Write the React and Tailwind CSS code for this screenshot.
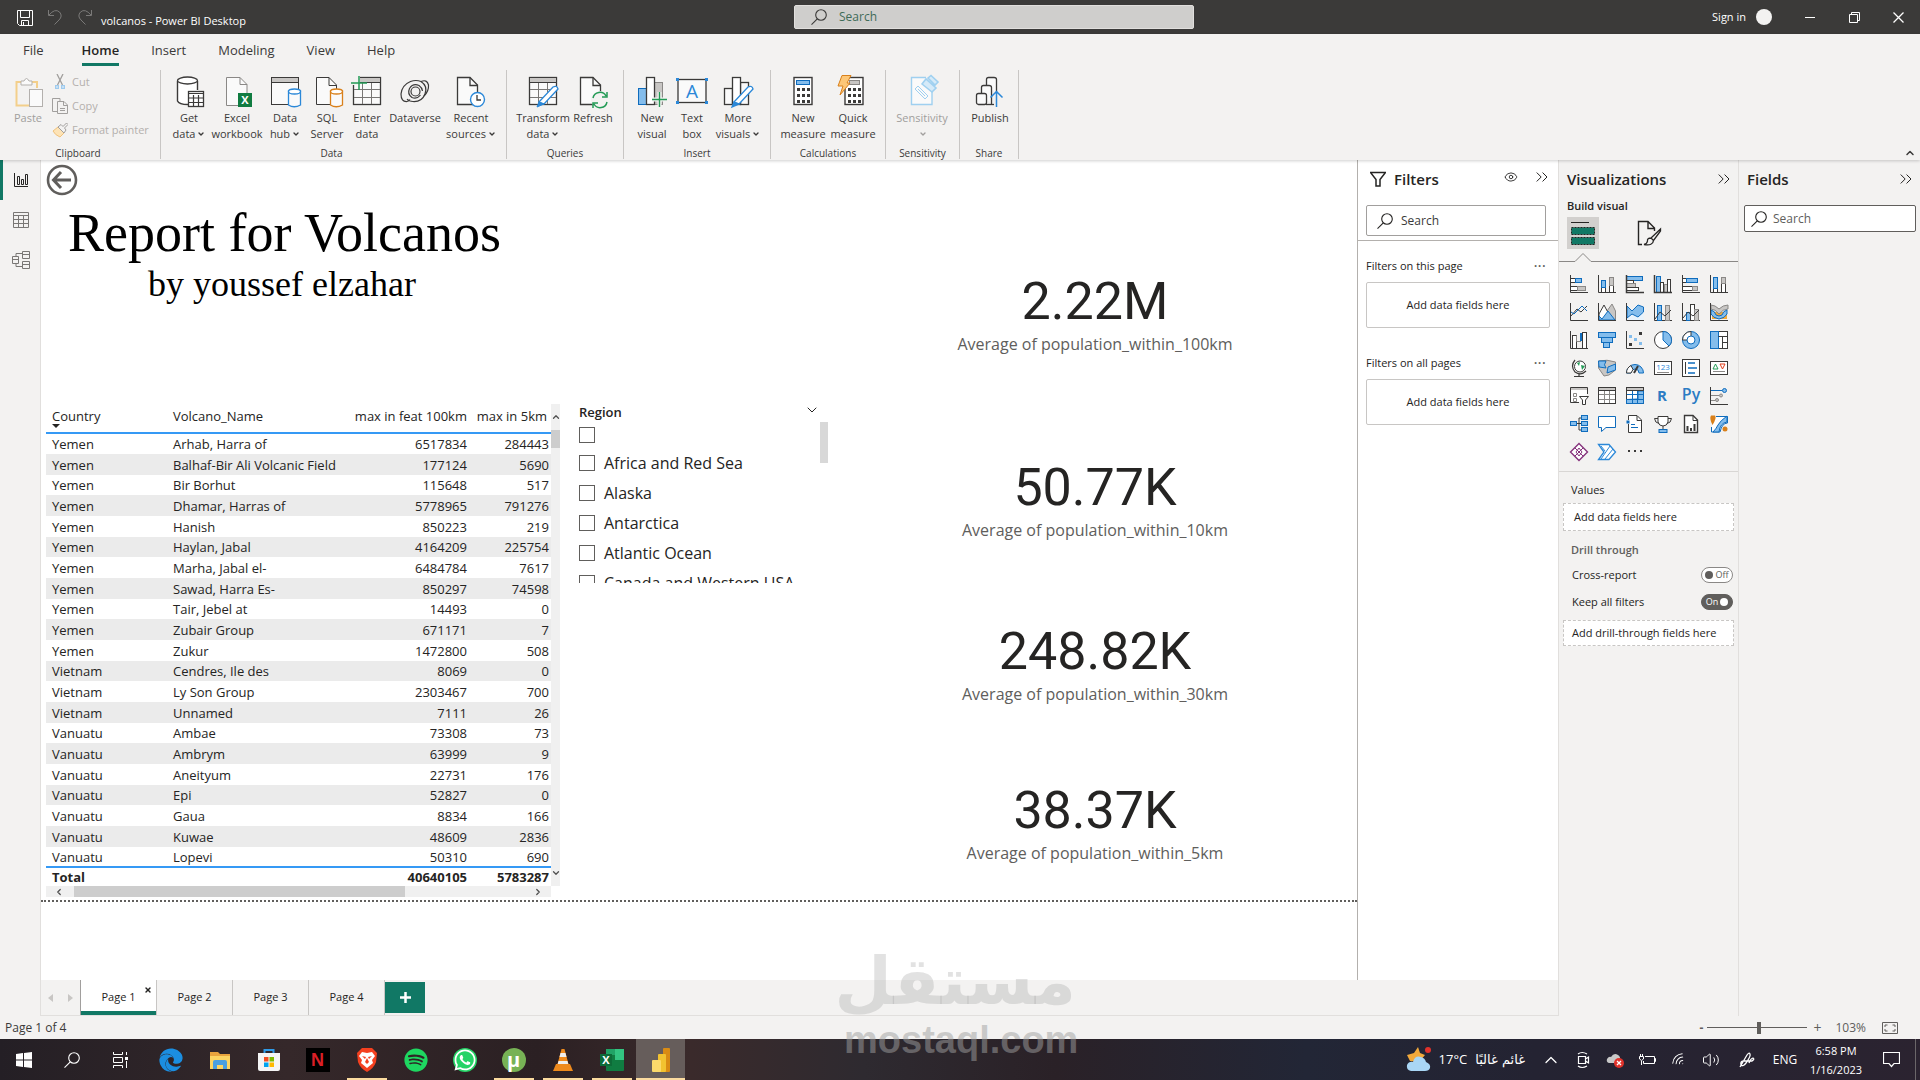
import React, { useState } from 'react'
import { ChevronDown, ChevronUp, ChevronsRight, Eye, Wifi, Volume2, X } from 'lucide-react'
import { FaEdge, FaSpotify, FaWhatsapp } from 'react-icons/fa'

const INK = '#3b3a39'
const BLUE = '#0f6cbd'
const LIGHT = '#84bdec'
const GREY = '#c8c6c4'

function Icon({ size = 18, box = size, children, className = '' }) {
  return (
    <svg
      width={size}
      height={size}
      viewBox={`0 0 ${box} ${box}`}
      fill="none"
      stroke={INK}
      className={`shrink-0 ${className}`}
      aria-hidden="true"
    >
      {children}
    </svg>
  )
}

function SearchIcon({ className = '' }) {
  return (
    <svg viewBox="0 0 16 16" fill="none" stroke="currentColor" strokeWidth="1.100" className={`size-4 shrink-0 ${className}`} aria-hidden="true">
      <circle cx="10" cy="6" r="5.300" />
      <path d="M6.300 9.800L0.500 15.600" />
    </svg>
  )
}

/* ---------- Ribbon icons, 32px ---------- */

const calcKeys = (x) =>
  [13, 19, 25].map((y) => [0, 5, 10].map((dx) => (
    <rect key={`${y}${dx}`} x={x + dx} y={y - 1} width="3" height="3" fill={INK} stroke="none" />
  )))

const pencil = (
  <g stroke="#2b88d8" fill="#fff">
    <path d="M12 26L26 11Q30 9 31 13L17 28Z" strokeWidth="1.300" />
    <path d="M12 26L17 28L10 31Z" fill="#2b88d8" />
  </g>
)

const ribbonIcons = {
  paste: (
    <g stroke="#b3b0ad">
      <path d="M9 6H4.500V29.500H17M19 6H25V12" stroke="#f3cf8b" strokeWidth="2" />
      <path d="M9 9V5H12Q14.500 0 17 5H20V9Z" fill="#fafafa" />
      <rect x="17.500" y="13.500" width="13" height="17" fill="#fafafa" />
    </g>
  ),
  getData: (
    <g>
      <path d="M5 4.500V25Q8 29 17 28.500H25V4.500" fill="#fff" stroke="none" />
      <path d="M4.500 5V25Q6 28.500 15 28.500M24.500 5V14" strokeWidth="1.400" />
      <ellipse cx="14.500" cy="4.500" rx="10" ry="3.500" fill="#fff" strokeWidth="1.300" />
      <rect x="15.500" y="15.500" width="15" height="15" fill="#fff" strokeWidth="1.300" />
      <path d="M15.500 17.500H30.500M15.500 22H30.500M15.500 26.500H30.500M20.500 19V30M25.500 19V30" strokeWidth="1.200" />
    </g>
  ),
  excel: (
    <g>
      <path d="M5.500 1.500H19L26 8.500V29.500H5.500Z" fill="#fafafa" stroke="#8a8886" />
      <path d="M19 1.500V8.500H26" stroke="#8a8886" />
      <rect x="17" y="17" width="14" height="14" fill="#107c41" stroke="none" />
      <text x="24" y="28" fontSize="11" fontWeight="700" fill="#fff" stroke="none" textAnchor="middle">X</text>
    </g>
  ),
  dataHub: (
    <g>
      <rect x="2.500" y="1.500" width="27" height="27" fill="#fafafa" />
      <rect x="3" y="2" width="26" height="4" fill={GREY} stroke="none" />
      <path d="M2.500 6.500H29.500" />
      <path d="M19.500 15V29Q25 32.500 31.500 29V15Z" fill="#fafafa" stroke="#2b88d8" strokeWidth="1.300" />
      <ellipse cx="25.500" cy="15.500" rx="6" ry="2.500" fill="#fff" stroke="#2b88d8" strokeWidth="1.300" />
    </g>
  ),
  sql: (
    <g>
      <path d="M5.500 1.500H18L25.500 9V28.500H5.500Z" fill="#fafafa" />
      <path d="M18 1.500V9.500H25.500" />
      <path d="M19.500 15V29Q25 32.500 31.500 29V15Z" fill="#fafafa" stroke="#d9801b" strokeWidth="1.300" />
      <ellipse cx="25.500" cy="15.500" rx="6" ry="2.500" fill="#fff" stroke="#d9801b" strokeWidth="1.300" />
    </g>
  ),
  enterData: (
    <g>
      <rect x="2.500" y="1.500" width="27" height="27" fill="#fafafa" strokeWidth="1.300" />
      <rect x="3" y="2" width="26" height="4" fill={GREY} stroke="none" />
      <path d="M2.500 6.500H29.500" />
      <path d="M3 13.500H29M3 21.500H29M11.500 7V28M20.500 7V28" stroke="#797775" />
      <rect x="0" y="0" width="9" height="9" fill="#f3f2f1" stroke="none" />
      <path d="M8 0V14M0 7H16" stroke="#239b56" strokeWidth="1.500" />
    </g>
  ),
  dataverse: (
    <g strokeWidth="1.200">
      <path d="M25 20Q30 15 29.500 9Q28 3 22 5.500Q17 3.500 11.500 5.500Q3 9 2 18Q2 26 8 25.500Q10 25 11 23.500" />
      <path d="M22 5.500Q29 10 26 18Q23 26 14 25.500Q10 25.500 8 23" />
      <path d="M21.500 19Q18 23.500 13 21.500Q8 18 10.500 12.500Q14 7 20 9.500Q23 11.500 23.500 15" />
      <circle cx="16.500" cy="15.500" r="4.500" />
    </g>
  ),
  recent: (
    <g>
      <path d="M2.500 1.500H15L22.500 9V28.500H2.500Z" fill="#fafafa" strokeWidth="1.300" />
      <path d="M15 1.500V9.500H22.500" strokeWidth="1.300" />
      <circle cx="22.500" cy="23.500" r="7" fill="#fff" stroke="#2b88d8" strokeWidth="1.400" />
      <path d="M22 19V24H26" strokeWidth="1.300" />
    </g>
  ),
  transform: (
    <g>
      <rect x="2.500" y="1.500" width="27" height="27" fill="#fafafa" strokeWidth="1.300" />
      <rect x="3" y="2" width="26" height="4" fill={GREY} stroke="none" />
      <path d="M3 13.500H29M3 21.500H29M11.500 7V28M20.500 7V28" stroke="#797775" />
      <path d="M2.500 6.500H29.500" />
      {pencil}
    </g>
  ),
  refresh: (
    <g>
      <path d="M3.500 1.500H16L23.500 9V28.500H3.500Z" fill="#fafafa" strokeWidth="1.300" />
      <path d="M16 1.500V9.500H23.500" strokeWidth="1.300" />
      <circle cx="23" cy="24" r="9" fill="#f3f2f1" stroke="none" />
      <path d="M16 22A7 7 0 0 1 29 20M30 26A7 7 0 0 1 17 28M30 16V21H25M16 32V27H21" stroke="#239b56" strokeWidth="1.500" />
    </g>
  ),
  newVisual: (
    <g>
      <rect x="2.500" y="12.500" width="8" height="16" fill={LIGHT} stroke={BLUE} />
      <rect x="18.500" y="6.500" width="8" height="22" fill={GREY} stroke="#8a8886" />
      <rect x="10.500" y="1.500" width="8" height="27" fill="#fff" strokeWidth="1.300" />
      <path d="M23.500 16V31M16 23.500H31" stroke="#f3f2f1" strokeWidth="4" />
      <path d="M23.500 16V31M16 23.500H31" stroke="#239b56" strokeWidth="1.400" />
    </g>
  ),
  textBox: (
    <g>
      <rect x="2" y="3.500" width="28" height="23" fill="#fafafa" strokeWidth="1.300" />
      <text x="16" y="22" fontSize="19" fill="#2b88d8" stroke="none" textAnchor="middle">A</text>
      <g fill="#2b88d8" stroke="none">
        <rect x="0" y="2" width="3" height="3" /><rect x="29" y="2" width="3" height="3" />
        <rect x="0" y="25" width="3" height="3" /><rect x="29" y="25" width="3" height="3" />
      </g>
    </g>
  ),
  moreVisuals: (
    <g strokeWidth="1.300">
      <rect x="2.500" y="12.500" width="8" height="16" fill="#fafafa" />
      <rect x="18.500" y="6.500" width="8" height="22" fill="#fafafa" />
      <rect x="10.500" y="1.500" width="8" height="27" fill="#fff" />
      {pencil}
    </g>
  ),
  newMeasure: (
    <g>
      <rect x="7" y="1.500" width="18" height="27" fill="#fff" strokeWidth="1.400" />
      <rect x="9.500" y="4.500" width="13" height="4" fill={LIGHT} stroke={BLUE} />
      {calcKeys(10)}
    </g>
  ),
  quickMeasure: (
    <g>
      <rect x="8" y="1.500" width="18" height="27" fill="#fff" strokeWidth="1.400" />
      <rect x="12.500" y="4.500" width="10" height="4" fill={GREY} stroke="#8a8886" />
      {calcKeys(11)}
      <path d="M5 -0.500H14L10 7H13L3 19L6 10H1Z" fill="#fdc777" stroke="#d9801b" />
    </g>
  ),
  sensitivity: (
    <g stroke="#9fd0f0">
      <path d="M20 1.500H5.500V28.500H26V15" fill="#fafafa" strokeWidth="1.400" />
      <path d="M9 13L12 10L22 20L19 23Z" />
      <path d="M12 13L19 20" />
      <path d="M16 8L20 3L30 12L26 16ZM22 2L25 -0.500L32 6L29 9Z" fill="#d5eaf8" strokeWidth="1.600" />
    </g>
  ),
  publish: (
    <g strokeWidth="1.300">
      <path d="M12.500 9.500V3.500Q12.500 1.500 14.500 1.500H20Q22.500 1.500 22.500 3.500V17" fill="#fafafa" />
      <path d="M7.500 17.500V11.500Q7.500 9.500 9.500 9.500H15Q17.500 9.500 17.500 11.500V28" fill="#fafafa" />
      <rect x="2.500" y="17.500" width="10" height="11" rx="2" fill="#fafafa" />
      <path d="M12 28.500H20" />
      <path d="M22.500 31V16M16.500 21.500L22.500 15.500L28.500 21.500" stroke="#2b88d8" strokeWidth="1.500" />
    </g>
  ),
}

const ribbon = [
  {
    name: 'Data',
    className: 'w-[346px] pl-1',
    items: [
      ['getData', 'Get', 'data', true, 'w-12'],
      ['excel', 'Excel', 'workbook', false, 'w-12'],
      ['dataHub', 'Data', 'hub', true, 'w-12'],
      ['sql', 'SQL', 'Server', false, 'w-9'],
      ['enterData', 'Enter', 'data', false, 'w-11'],
      ['dataverse', 'Dataverse', '', false, 'w-13'],
      ['recent', 'Recent', 'sources', true, 'w-15'],
    ],
  },
  {
    name: 'Queries',
    className: 'w-[117px] pl-2',
    items: [
      ['transform', 'Transform', 'data', true, 'w-14'],
      ['refresh', 'Refresh', '', false, 'w-11'],
    ],
  },
  {
    name: 'Insert',
    className: 'w-[147px] pl-2',
    items: [
      ['newVisual', 'New', 'visual', false, 'w-10'],
      ['textBox', 'Text', 'box', false, 'w-10'],
      ['moreVisuals', 'More', 'visuals', true, 'w-13'],
    ],
  },
  {
    name: 'Calculations',
    className: 'w-[115px] pl-2',
    items: [
      ['newMeasure', 'New', 'measure', false, 'w-12'],
      ['quickMeasure', 'Quick', 'measure', false, 'w-13'],
    ],
  },
  {
    name: 'Sensitivity',
    className: 'w-[74px] pl-2',
    items: [['sensitivity', 'Sensitivity', '', true, 'w-14']],
    disabled: true,
  },
  {
    name: 'Share',
    className: 'w-[59px] pl-2',
    items: [['publish', 'Publish', '', false, 'w-11']],
  },
]

function RibbonButton({ icon, line1, line2, arrow, width, disabled }) {
  return (
    <button
      disabled={disabled}
      className={`flex flex-col items-center whitespace-nowrap text-[11px] leading-4 ${width} ${
        disabled ? 'text-[#a19f9d]' : 'text-[#3b3a39]'
      }`}
    >
      <Icon size={32} className="mb-0.5 overflow-visible">{ribbonIcons[icon]}</Icon>
      <span>{line1}</span>
      <span className="flex h-4 items-center">
        {line2}
        {arrow && <ChevronDown className="ml-0.5 size-2" strokeWidth={4} />}
      </span>
    </button>
  )
}

function RibbonGroup({ name, className, children }) {
  return (
    <section className={`flex h-[89px] shrink-0 flex-col border-r border-[#c8c6c4] ${className}`} aria-label={name}>
      <div className="flex h-[77px] pt-1.5">{children}</div>
      <div className="pr-2 text-center text-[10px] leading-3 text-[#3b3a39]">{name}</div>
    </section>
  )
}

function TitleBar() {
  return (
    <div className="grid h-[34px] grid-cols-[794fr_400fr_726fr] items-center bg-[#3b3a39] text-xs text-white">
      <div className="flex items-center pl-4">
        <button aria-label="Save" className="mr-3.5">
          <Icon size={17} className="stroke-white!">
            <path d="M1.500 1.500H16.500V16.500H3.500L1.500 14.500ZM4.500 2V8.500H13.500V2M5.500 16V11.500H12.500V16M7.500 13V16" />
          </Icon>
        </button>
        <button aria-label="Undo" className="mr-3.5">
          <Icon size={16} className="stroke-[#7a7978]!">
            <path d="M1.500 1V6.500H7M2 6Q8 -1 12.500 3Q16 7 12 11L7.500 15.500" />
          </Icon>
        </button>
        <button aria-label="Redo" className="mr-2">
          <Icon size={16} className="stroke-[#7a7978]!">
            <path d="M14.500 1V6.500H9M14 6Q8 -1 3.500 3Q0 7 4 11L8.500 15.500" />
          </Icon>
        </button>
        <span className="pt-2 text-[11px]">volcanos - Power BI Desktop</span>
      </div>
      <label className="flex h-6 items-center rounded-xs border border-[#e1dfdd] bg-[#cfcecc] pl-4 text-[#3b3a39]">
        <SearchIcon />
        <input
          type="text"
          aria-label="Search"
          placeholder="Search"
          className="ml-3 w-full bg-transparent text-xs outline-none placeholder:text-[#3f6b58]"
        />
      </label>
      <div className="flex items-center justify-end">
        <button className="flex items-center gap-2.5 text-[11px]">
          Sign in <span className="size-4 rounded-full bg-[#f3f2f1]" />
        </button>
        <div className="ml-4 flex">
          <button aria-label="Minimize" className="flex w-11 justify-center">
            <Icon size={11} className="stroke-white!"><path d="M0 5.500H10" /></Icon>
          </button>
          <button aria-label="Restore" className="flex w-11 justify-center">
            <Icon size={11} className="stroke-white!">
              <path d="M0.500 2.500H8.500V10.500H0.500ZM2.500 2V0.500H10.500V8.500H9" />
            </Icon>
          </button>
          <button aria-label="Close" className="flex w-11 justify-center">
            <Icon size={11} className="stroke-white!"><path d="M0.500 0.500L10.500 10.500M10.500 0.500L0.500 10.500" strokeWidth="1.300" /></Icon>
          </button>
        </div>
      </div>
    </div>
  )
}

function Ribbon() {
  return (
    <header className="relative z-10 h-[126px] bg-[#f3f2f1] text-[#3b3a39] shadow-[0_1px_3px_#00000030]">
      <nav className="flex h-9 gap-8 pl-[23px] text-[13px] leading-[33px]">
        <a href="#file" className="mr-1.5">File</a>
        <a href="#home" className="h-8 border-b-3 border-[#117865] font-semibold text-[#252423]">Home</a>
        <a href="#insert">Insert</a>
        <a href="#modeling">Modeling</a>
        <a href="#view">View</a>
        <a href="#help">Help</a>
      </nav>
      <div className="flex">
        <RibbonGroup name="Clipboard" className="w-[161px] pl-1">
          <RibbonButton icon="paste" line1="Paste" width="w-12" disabled />
          <div className="-mt-1.5 flex flex-col text-[11px] leading-6 text-[#b3b0ad]">
            <button disabled className="flex items-center gap-1">
              <Icon size={16} className="stroke-[#a19f9d]!">
                <path d="M5 0L10.500 11M11 0L5.500 11" strokeWidth="1.300" />
                <rect x="3.500" y="11.500" width="3" height="3" fill="#c7e0f4" stroke="#9fcbee" /><rect x="9.500" y="11.500" width="3" height="3" fill="#c7e0f4" stroke="#9fcbee" />
              </Icon>
              Cut
            </button>
            <button disabled className="flex items-center gap-1">
              <Icon size={16} className="stroke-[#a19f9d]!">
                <path d="M5 13.500H0.500V0.500H8V3M5.500 3.500H12L15.500 7V15.500H5.500ZM11.500 4V7.500H15M8 10.500H13M8 12.500H13" />
              </Icon>
              Copy
            </button>
            <button disabled className="flex items-center gap-1 whitespace-nowrap">
              <Icon size={16} className="stroke-[#a19f9d]!">
                <path d="M1 9L6 5L12 11L8 15Q3 13 1 9Z" fill="#fde3b6" stroke="#f0c27c" />
                <path d="M6 5L9 2.500L11 4.500L14.500 1L16 2.500L12.500 6L14 8L12 11Z" fill="#f3f2f1" />
              </Icon>
              Format painter
            </button>
          </div>
        </RibbonGroup>
        {ribbon.map((g) => (
          <RibbonGroup key={g.name} name={g.name} className={g.className}>
            {g.items.map(([icon, line1, line2, arrow, width]) => (
              <RibbonButton key={icon} icon={icon} line1={line1} line2={line2} arrow={arrow} width={width} disabled={g.disabled} />
            ))}
          </RibbonGroup>
        ))}
        <button aria-label="Collapse ribbon" className="mt-auto mr-1 ml-auto">
          <ChevronUp className="size-3" strokeWidth={3} />
        </button>
      </div>
    </header>
  )
}

function ViewRail() {
  return (
    <nav className="flex w-[41px] shrink-0 flex-col border-r border-[#e1dfdd] bg-[#f3f2f1]">
      <button aria-label="Report view" className="flex h-10 items-center border-l-3 border-[#117865] pl-2.5">
        <Icon size={16} className="stroke-[#252423]!">
          <path d="M1.500 1V14.500H15M4.500 4.500H6.500V12.500H4.500ZM8.500 7.500H10.500V12.500H8.500ZM12.500 2.500H14.500V12.500H12.500Z" />
        </Icon>
      </button>
      <button aria-label="Data view" className="flex h-10 items-center pl-3">
        <Icon size={18} className="stroke-[#797775]!">
          <path d="M1.500 1.500H16.500V16.500H1.500ZM1.500 4.500H16.500M1.500 8.500H16.500M1.500 12.500H16.500M6.500 5V16M11.500 5V16" />
        </Icon>
      </button>
      <button aria-label="Model view" className="flex h-10 items-center pl-3">
        <Icon size={18} className="stroke-[#797775]!">
          <path d="M0.500 5.500H6.500V12.500H0.500ZM0.500 8.500H6.500M10.500 0.500H17.500V7.500H10.500ZM10.500 3.500H17.500M10.500 10.500H17.500V17.500H10.500ZM10.500 13.500H17.500M4 5V2.500H10M4 13V15.500H10" />
        </Icon>
      </button>
    </nav>
  )
}

const rows = [
  ['Yemen', 'Arhab, Harra of', 6517834, 284443],
  ['Yemen', 'Balhaf-Bir Ali Volcanic Field', 177124, 5690],
  ['Yemen', 'Bir Borhut', 115648, 517],
  ['Yemen', 'Dhamar, Harras of', 5778965, 791276],
  ['Yemen', 'Hanish', 850223, 219],
  ['Yemen', 'Haylan, Jabal', 4164209, 225754],
  ['Yemen', 'Marha, Jabal el-', 6484784, 7617],
  ['Yemen', 'Sawad, Harra Es-', 850297, 74598],
  ['Yemen', 'Tair, Jebel at', 14493, 0],
  ['Yemen', 'Zubair Group', 671171, 7],
  ['Yemen', 'Zukur', 1472800, 508],
  ['Vietnam', 'Cendres, Ile des', 8069, 0],
  ['Vietnam', 'Ly Son Group', 2303467, 700],
  ['Vietnam', 'Unnamed', 7111, 26],
  ['Vanuatu', 'Ambae', 73308, 73],
  ['Vanuatu', 'Ambrym', 63999, 9],
  ['Vanuatu', 'Aneityum', 22731, 176],
  ['Vanuatu', 'Epi', 52827, 0],
  ['Vanuatu', 'Gaua', 8834, 166],
  ['Vanuatu', 'Kuwae', 48609, 2836],
  ['Vanuatu', 'Lopevi', 50310, 690],
]

function VolcanoTable() {
  return (
    <div className="grid w-[514px] grid-cols-[1fr_9px]">
      <table className="w-full table-fixed border-collapse text-[13px] leading-4 text-[#252423]">
        <colgroup>
          <col className="w-[121px]" />
          <col />
          <col className="w-[122px]" />
          <col className="w-[82px]" />
        </colgroup>
        <thead>
          <tr className="h-[29px] border-b-2 border-[#3599f5] text-left align-top whitespace-nowrap">
            <th className="pt-1 pl-1.5 font-normal">
              Country
              <svg width="8" height="4" viewBox="0 0 8 4" className="block" aria-hidden="true"><path d="M0 0H8L4 4Z" fill="#252423" /></svg>
            </th>
            <th className="pt-1 pl-1.5 font-normal">Volcano_Name</th>
            <th className="pt-1 pr-0.5 text-right font-normal">max in feat 100km</th>
            <th className="pt-1 pr-1 text-right font-normal">max in 5km</th>
          </tr>
        </thead>
        <tbody>
          {rows.map(([country, name, feat, near]) => (
            <tr key={name} className="h-[21px] nth-[3n]:h-5 even:bg-[#ebebeb]">
              <td className="pl-1.5">{country}</td>
              <td className="pl-1.5 whitespace-nowrap">{name}</td>
              <td className="pr-0.5 text-right">{feat}</td>
              <td className="pr-0.5 text-right">{near}</td>
            </tr>
          ))}
        </tbody>
        <tfoot>
          <tr className="h-[19px] border-t-2 border-[#3599f5] font-bold">
            <td className="pl-1.5">Total</td>
            <td />
            <td className="pr-0.5 text-right">40640105</td>
            <td className="pr-0.5 text-right">5783287</td>
          </tr>
        </tfoot>
      </table>
      <div className="flex flex-col items-center bg-[#f0f0f0] text-[#505050]">
        <ChevronUp className="mt-2 size-2.5" strokeWidth={3} />
        <div className="mt-2 h-[18px] w-full bg-[#cdcdcd]" />
        <ChevronDown className="mt-auto mb-2 size-2.5" strokeWidth={3} />
      </div>
      <div className="flex h-[11px] items-center bg-[#f0f0f0] px-2 text-[#505050]">
        <ChevronUp className="size-2.5 -rotate-90" strokeWidth={3} />
        <div className="ml-2.5 h-full w-[331px] bg-[#cdcdcd]" />
        <ChevronUp className="ml-auto size-2.5 rotate-90" strokeWidth={3} />
      </div>
    </div>
  )
}

const regions = ['', 'Africa and Red Sea', 'Alaska', 'Antarctica', 'Atlantic Ocean', 'Canada and Western USA']

function RegionSlicer() {
  return (
    <fieldset className="h-[179px] w-[249px] overflow-hidden text-[#252423]">
      <div className="flex h-[18px] items-center justify-between pr-2">
        <span className="text-[13px] font-semibold">Region</span>
        <ChevronDown className="mb-1.5 size-4" strokeWidth={1.5} />
      </div>
      <div className="flex justify-between">
        <div className="flex flex-col pt-[5px]">
          {regions.map((r) => (
            <label key={r} className="flex h-[30px] gap-[9px] text-base leading-4 first:h-7">
              <input
                type="checkbox"
                aria-label={r || '(Blank)'}
                className="size-4 appearance-none border border-[#605e5c] bg-white checked:bg-[#252423]"
              />
              {r}
            </label>
          ))}
        </div>
        <div className="h-[41px] w-2 bg-[#d8d8d8]" />
      </div>
    </fieldset>
  )
}

function Card({ value, label, className }) {
  return (
    <div className={`flex flex-col items-center ${className}`}>
      <div className="font-[Roboto] text-[52px] leading-[60px] text-[#252423]">{value}</div>
      <div className="text-base leading-6 text-[#605e5c]">{label}</div>
    </div>
  )
}

function Canvas() {
  return (
    <main className="flex min-w-0 flex-1 flex-col bg-white">
      <div className="flex h-[742px] border-b-2 border-dotted border-[#605e5c]">
        <div className="w-[538px] shrink-0 pt-1 pl-[5px]">
          <button aria-label="Back" className="block">
            <Icon size={32} className="stroke-[#605e5c]!">
              <circle cx="16" cy="16" r="14" strokeWidth="2.600" />
              <path d="M25 16H8M15 8L7.500 16L15 24" strokeWidth="3" />
            </Icon>
          </button>
          <div className="mt-2 mb-[98px] pl-[22px] font-['Liberation_Serif',serif] text-black">
            <h1 className="text-[54px] leading-[58px]">Report for Volcanos</h1>
            <p className="w-[428px] text-center text-[36px] leading-[44px]">by youssef elzahar</p>
          </div>
          <VolcanoTable />
        </div>
        <div className="w-[254px] shrink-0 pt-[244px]">
          <RegionSlicer />
        </div>
        <div className="flex-1">
          <Card value="2.22M" label="Average of population_within_100km" className="pt-[112px]" />
          <Card value="50.77K" label="Average of population_within_10km" className="pt-[102px]" />
          <Card value="248.82K" label="Average of population_within_30km" className="pt-20" />
          <Card value="38.37K" label="Average of population_within_5km" className="pt-[75px]" />
        </div>
      </div>
    </main>
  )
}

function DropBox({ title }) {
  return (
    <section className="px-2">
      <div className="flex items-center justify-between">
        <h3>{title}</h3>
        <button aria-label={`${title} options`} className="px-1 text-base leading-4 text-[#605e5c]">···</button>
      </div>
      <div className="mt-2 flex h-[46px] items-center justify-center rounded-xs border border-[#c8c6c4] bg-white">
        Add data fields here
      </div>
    </section>
  )
}

function FiltersPane() {
  return (
    <aside className="flex w-[201px] shrink-0 flex-col border-l border-[#b3b0ad] bg-white text-[11px] leading-4 text-[#252423]">
      <div className="flex h-[38px] items-center pr-1.5 pl-3">
        <Icon size={16} className="stroke-[#252423]!">
          <path d="M0.500 1.500H15.500L10 8.500V15H6V8.500Z" strokeWidth="1.500" />
        </Icon>
        <h2 className="ml-2 text-[15px] font-semibold">Filters</h2>
        <button aria-label="Show filters" className="mr-3.5 mb-1 ml-auto"><Eye className="size-3.5" strokeWidth={1.500} /></button>
        <button aria-label="Collapse filters" className="mb-1"><ChevronsRight className="size-5" strokeWidth={1.2} /></button>
      </div>
      <div className="mb-[17px] border-b border-[#b3b0ad] px-2 pt-[7px] pr-3 pb-1">
        <label className="flex h-[31px] items-center rounded-xs border border-[#a19f9d] pl-2.5">
          <SearchIcon />
          <input type="text" aria-label="Search filters" placeholder="Search" className="ml-2 w-full text-xs outline-none placeholder:text-[#3b3a39]" />
        </label>
      </div>
      <div className="flex flex-col gap-[27px]">
        <DropBox title="Filters on this page" />
        <DropBox title="Filters on all pages" />
      </div>
    </aside>
  )
}

/* ---------- Visual gallery, 18px glyphs ---------- */

const axes = <path d="M0.500 0V17.500H18" />
const bF = { fill: LIGHT, stroke: BLUE }
const gF = { fill: GREY, stroke: '#8a8886' }
const wF = { fill: '#fff', stroke: INK }

const gallery = [
  ['Stacked bar chart', <><rect x="0.500" y="3.500" width="5" height="4" {...wF} /><rect x="5.500" y="3.500" width="6" height="4" {...bF} /><rect x="0.500" y="11.500" width="7" height="4" {...wF} /><rect x="7.500" y="11.500" width="8" height="4" {...gF} />{axes}</>],
  ['Stacked column chart', <>{axes}<rect x="3.500" y="11.500" width="4" height="6" {...wF} /><rect x="3.500" y="5.500" width="4" height="7" {...bF} /><rect x="11.500" y="10.500" width="4" height="7" {...wF} /><rect x="11.500" y="2.500" width="4" height="8" {...gF} /></>],
  ['Clustered bar chart', <><rect x="0.500" y="1.500" width="16" height="4" {...bF} /><rect x="0.500" y="5.500" width="7" height="3" {...wF} /><rect x="0.500" y="8.500" width="9" height="4" {...gF} /><rect x="0.500" y="12.500" width="12" height="3" {...wF} /><path d="M0.500 0V17.500H18" strokeWidth="1.500" /></>],
  ['Clustered column chart', <><rect x="2.500" y="1.500" width="4" height="16" {...bF} /><rect x="6.500" y="7.500" width="3" height="10" {...wF} /><rect x="10.500" y="9.500" width="3" height="8" {...gF} /><rect x="13.500" y="4.500" width="3" height="13" {...wF} /><path d="M0.500 0V17.500H18" strokeWidth="1.500" /></>],
  ['100% stacked bar chart', <><rect x="0.500" y="3.500" width="4" height="4" {...wF} /><rect x="4.500" y="3.500" width="11" height="4" {...bF} /><rect x="0.500" y="11.500" width="10" height="4" {...wF} /><rect x="10.500" y="11.500" width="5" height="4" {...gF} />{axes}</>],
  ['100% stacked column chart', <>{axes}<rect x="3.500" y="13.500" width="4" height="4" {...wF} /><rect x="3.500" y="2.500" width="4" height="11" {...bF} /><rect x="11.500" y="8.500" width="4" height="9" {...wF} /><rect x="11.500" y="2.500" width="4" height="6" {...gF} /></>],
  ['Line chart', <>{axes}<path d="M1 13L7 6L11 9L17 3" /><path d="M1 9L4 11L12 3L17 8" stroke={BLUE} /></>],
  ['Area chart', <><path d="M9 8L14 1L17.500 8V17H10Z" {...gF} /><path d="M1 11L6 2L14 17H1Z" {...wF} /><path d="M1 13L4 16L10 8L17 17H1Z" {...bF} />{axes}</>],
  ['Stacked area chart', <><path d="M1 3L6 8L12 3L17.500 6V17H1Z" fill="#e8f3fc" stroke="none" /><path d="M1 3L6 8L12 2L17.500 4V9L12 14L6 11L1 15Z" {...bF} />{axes}</>],
  ['Line and stacked column chart', <>{axes}<rect x="3.500" y="2.500" width="4" height="15" {...bF} /><rect x="11.500" y="2.500" width="4" height="15" {...gF} /><path d="M1 16L6 9L11 13L17 7" /></>],
  ['Line and clustered column chart', <>{axes}<rect x="4.500" y="9.500" width="4" height="8" {...bF} /><rect x="8.500" y="1.500" width="4" height="16" {...wF} /><rect x="12.500" y="6.500" width="4" height="11" {...gF} /><path d="M1 15L6 9L11 13L17 7" /></>],
  ['Ribbon chart', <><rect x="2" y="9" width="15" height="7" fill="#f2a93b" stroke="none" /><path d="M1 2Q5 2 9 6Q13 2 18 2V6Q13 6 9 11Q5 6 1 6Z" {...gF} /><path d="M1 7Q5 8 6 12Q9 14 12 12Q13 8 17 7V11Q15 15 9 16Q3 15 1 11Z" {...bF} />{axes}</>],
  ['Waterfall chart', <>{axes}<rect x="2.500" y="4.500" width="4" height="13" {...wF} /><path d="M6.500 4.500V10.500H11" stroke="#8a8886" /><path d="M11 2V10" stroke={BLUE} strokeWidth="2" /><rect x="12.500" y="1.500" width="4" height="16" {...wF} /></>],
  ['Funnel', <><rect x="0.500" y="1.500" width="17" height="5" {...bF} /><rect x="3.500" y="6.500" width="11" height="5" {...bF} /><rect x="5.500" y="11.500" width="6" height="5" {...bF} /></>],
  ['Scatter chart', <>{axes}<g stroke="none"><rect x="13" y="1" width="3" height="3" fill={INK} /><rect x="3" y="12" width="3" height="3" fill={INK} /><rect x="3" y="4" width="3" height="3" fill={LIGHT} /><rect x="8" y="7" width="3" height="3" fill={LIGHT} /><rect x="13" y="11" width="3" height="3" fill={LIGHT} /></g></>],
  ['Pie chart', <><circle cx="9" cy="9" r="8.500" {...wF} /><path d="M9 0.500A8.500 8.500 0 0 1 15 15L9 9Z" {...bF} /></>],
  ['Donut chart', <><circle cx="9" cy="9" r="8.500" {...bF} /><path d="M9 0.500A8.500 8.500 0 0 0 0.500 9H5L9 5Z" {...wF} /><circle cx="9" cy="9" r="4" fill="#fff" stroke={BLUE} /></>],
  ['Treemap', <><rect x="0.500" y="0.500" width="17" height="17" {...wF} /><rect x="0.500" y="0.500" width="8" height="17" {...bF} /><path d="M8.500 5.500H17.500M12.500 6V17M13 11.500H17" /></>],
  ['Map', <><circle cx="10" cy="7.500" r="5.500" {...wF} /><path d="M7 4L10 3L9 7ZM11 6L15 7L12 11Z" fill="#239b56" stroke="none" /><path d="M5 1Q0 7 5 13Q11 17 16 12M9 14V17M4 17.500H14" strokeWidth="1.200" /></>],
  ['Filled map', <><path d="M0.500 2Q9 0 17.500 3V11L11 16L6 17L0.500 9Z" {...gF} /><path d="M0.500 2H8Q5 6 8 9L1 8ZM10 8L17.500 5V11L9 14Z" {...bF} /></>],
  ['Gauge', <><path d="M0.500 14A8.500 8.500 0 0 1 17.500 14H13A4 4 0 0 0 5 14Z" fill={LIGHT} stroke={BLUE} /><path d="M0.500 14A8.500 8.500 0 0 1 5 6.500L7 10.500L5 14Z" fill="#fff" /><path d="M8 14L12 7" strokeWidth="2" /></>],
  ['Card', <><rect x="0.500" y="2.500" width="17" height="13" {...wF} /><text x="9" y="11" fontSize="8" fill="#2b88d8" stroke="none" textAnchor="middle">123</text><path d="M3 13.500H15" stroke="#8a8886" /></>],
  ['Multi-row card', <><rect x="0.500" y="0.500" width="17" height="17" {...wF} /><path d="M3.500 3V15" /><path d="M6 4H13M6 9H15M6 14H13" stroke={BLUE} strokeWidth="1.500" /></>],
  ['KPI', <><rect x="0.500" y="2.500" width="17" height="13" {...wF} /><path d="M3 10L5.500 5L8 10Z" stroke="#239b56" /><path d="M10 5H15L12.500 10Z" stroke="#e03e1a" /><path d="M3 12.500H15" stroke="#8a8886" /></>],
  ['Slicer', <><path d="M9 15.500H0.500V0.500H17.500V7" {...wF} /><path d="M1 2H17" stroke={GREY} strokeWidth="2" /><path d="M3.500 6.500H6.500V9.500H3.500ZM3.500 11.500H6.500V14.500H3.500Z" stroke="#8a8886" /><path d="M9.500 9.500H18.500L15.500 13V17.500H12.500V13Z" {...wF} /></>],
  ['Table', <><rect x="0.500" y="0.500" width="17" height="16" {...wF} /><path d="M1 2H17" stroke={GREY} strokeWidth="2" /><path d="M1 7.500H17M1 12.500H17M6.500 4V16M11.500 4V16" stroke="#8a8886" /><path d="M1 3.500H17" /></>],
  ['Matrix', <><rect x="0.500" y="0.500" width="17" height="16" {...wF} /><path d="M0.500 12.500V16.500H17.500V4H12V12Z" {...bF} /><path d="M1 2H17" stroke={GREY} strokeWidth="2" /><path d="M1 7.500H17M1 12.500H17M6.500 4V16M11.500 4V16" stroke={BLUE} /><path d="M1 3.500H17" /></>],
  ['R script visual', <text x="8" y="14" fontSize="15" fontWeight="700" fill="#2b7cc4" stroke="none" textAnchor="middle">R</text>],
  ['Python visual', <text x="9" y="13" fontSize="16" fontWeight="600" fill="#2b7cc4" stroke="none" textAnchor="middle">Py</text>],
  ['Key influencers', <>{axes}<path d="M1 3.500H12" stroke={BLUE} /><circle cx="14.500" cy="3.500" r="2" {...bF} /><path d="M1 8.500H9M1 13.500H5" stroke="#8a8886" /><circle cx="11" cy="8.500" r="1.500" {...gF} /><circle cx="7" cy="13" r="1.500" {...gF} /></>],
  ['Decomposition tree', <><path d="M6 8.500H11M9 3V15M9 3H11M9 15H11" /><rect x="0.500" y="6.500" width="6" height="4" {...bF} /><rect x="11.500" y="0.500" width="6" height="4" {...bF} /><rect x="11.500" y="6.500" width="6" height="4" {...bF} /><rect x="11.500" y="12.500" width="6" height="4" {...bF} /></>],
  ['Q&A', <path d="M0.500 1.500H17.500V12.500H8L3.500 16.500V12.500H0.500Z" fill="#fff" stroke={BLUE} />],
  ['Smart narrative', <><path d="M2.500 5V0.500H11L15.500 5V17.500H2.500V9" fill="#fff" /><path d="M11 1V5.500H15" /><rect x="0.500" y="5.500" width="3" height="3" fill={BLUE} stroke="none" /><path d="M5 9.500H9M5 12.500H12" stroke={BLUE} /></>],
  ['Metrics', <><path d="M4 1.500H14V7Q13 11 9 11Q5 11 4 7Z" {...wF} /><path d="M4 3.500H0.500Q1 8 5 8.500M14 3.500H17.500Q17 8 13 8.500M9 11V14" /><rect x="5" y="14.500" width="8" height="3" {...bF} /></>],
  ['Paginated report', <><path d="M2.500 0.500H11L15.500 5V17.500H2.500Z" fill="#fff" strokeWidth="1.400" /><path d="M11 1V5.500H15" /><path d="M5.500 11V16M9 13V16M12.500 9V16" strokeWidth="2" /></>],
  ['ArcGIS Maps', <><path d="M6 1.500H17.500V8Q12 8 10 17H1.500V12" fill="#fff" stroke={BLUE} /><path d="M17 1Q10 6 8 10T3 17H9Q10 8 17 7Z" fill={LIGHT} stroke={BLUE} /><path d="M2.500 10Q-1 3 1 0.500H5Q7 3 2.500 10Z" fill="#d9801b" stroke="none" /><circle cx="15" cy="14" r="2.500" fill="#d9801b" stroke="none" /></>],
  ['Power Apps', <g stroke="#86337d"><path d="M9 0.500L17.500 9L9 17.500L0.500 9Z" fill="#fff" strokeWidth="1.400" /><path d="M5 5L13 13M13 5L5 13" /><path d="M9 5L12 9L9 13L6 9Z" /></g>],
  ['Power Automate', <g stroke="#2b88d8"><path d="M0.500 1.500H11L17.500 9L11 16.500H0.500L6 9Z" fill="#fff" strokeWidth="1.300" /><path d="M3 16L12 3M7 16L15 6M3 3L7 8" /></g>],
  ['More visuals', <g fill={INK} stroke="none"><rect x="2" y="7" width="2" height="2" /><rect x="8" y="7" width="2" height="2" /><rect x="14" y="7" width="2" height="2" /></g>],
]

function Toggle({ label, on, onChange }) {
  return (
    <label className="flex h-[27px] items-center justify-between pr-px pl-[9px]">
      {label}
      <input type="checkbox" className="peer sr-only" checked={on} onChange={onChange} />
      <span
        className={`flex h-4 w-8 items-center justify-center gap-0.5 rounded-full border text-[9px] leading-3 ${
          on ? 'flex-row-reverse border-[#605e5c] bg-[#605e5c] text-white' : 'border-[#8a8886] bg-white text-[#605e5c]'
        }`}
      >
        <span className={`size-2 rounded-full ${on ? 'bg-white' : 'bg-[#605e5c]'}`} />
        {on ? 'On' : 'Off'}
      </span>
    </label>
  )
}

function VisualizationsPane() {
  const [cross, setCross] = useState(false)
  const [keep, setKeep] = useState(true)
  return (
    <aside className="flex w-[181px] shrink-0 flex-col border-r border-l border-[#e1dfdd] text-[11px] leading-4 text-[#252423]">
      <div className="flex h-[38px] items-center justify-between pr-1 pl-2">
        <h2 className="text-[15px] font-semibold">Visualizations</h2>
        <button aria-label="Collapse visualizations"><ChevronsRight className="size-5" strokeWidth={1.2} /></button>
      </div>
      <div className="px-2 text-[11px] font-semibold">Build visual</div>
      <div className="mt-[3px] flex gap-[34px] pl-2">
        <button aria-label="Build visual" className="flex size-8 items-center justify-center bg-[#d2d0ce]">
          <Icon size={26} className="stroke-[#252423]!">
            <path d="M1 2.500H19" />
            <rect x="1.500" y="7.500" width="23" height="7" fill="#117865" strokeDasharray="2 1" />
            <rect x="1.500" y="17.500" width="23" height="7" fill="#117865" strokeDasharray="2 1" />
          </Icon>
        </button>
        <button aria-label="Format visual" className="flex size-8 items-center justify-center">
          <Icon size={26} className="stroke-[#252423]!">
            <path d="M6 24.500H2.500V1.500H12L18.500 8V11M12 1.500V8.500H18" strokeWidth="1.400" />
            <path d="M24.500 9L15 18L17.500 20.500L24.500 11ZM15 18Q11 18 11.500 21Q11 24 8 24.500Q17 26 17.500 20.500" strokeWidth="1.300" />
          </Icon>
        </button>
      </div>
      <svg viewBox="0 0 179 10" className="mt-1 h-2.5 w-full" fill="none" stroke="#8a8886" aria-hidden="true">
        <path d="M0 8.500H16L24 0.500L32 8.500H179" />
      </svg>
      <div className="mt-[7px] grid grid-cols-[repeat(6,28px)] pl-1.5">
        {gallery.map(([name, glyph]) => (
          <button key={name} aria-label={name} className="flex size-7 items-center justify-center">
            <Icon size={18} className="overflow-visible">{glyph}</Icon>
          </button>
        ))}
      </div>
      <div className="mt-[5px] border-t border-[#d8d6d4] pt-2.5 pr-1 pl-1">
        <h3 className="pl-2">Values</h3>
        <div className="mt-[5px] flex h-7 items-center border border-dashed border-[#c8c6c4] bg-white pl-2.5">
          Add data fields here
        </div>
        <h3 className="mt-[11px] mb-[3px] pl-2 font-semibold text-[#605e5c]">Drill through</h3>
        <Toggle label="Cross-report" on={cross} onChange={() => setCross(!cross)} />
        <Toggle label="Keep all filters" on={keep} onChange={() => setKeep(!keep)} />
        <div className="mt-[5px] flex h-[26px] items-center border border-dashed border-[#c8c6c4] bg-white pl-2 whitespace-nowrap">
          Add drill-through fields here
        </div>
      </div>
    </aside>
  )
}

function FieldsPane() {
  return (
    <aside className="w-[181px] shrink-0 text-[#252423]">
      <div className="flex h-[38px] items-center justify-between pr-1 pl-2">
        <h2 className="text-[15px] font-semibold">Fields</h2>
        <button aria-label="Collapse fields"><ChevronsRight className="size-5" strokeWidth={1.2} /></button>
      </div>
      <label className="mt-[7px] mr-1 ml-[5px] flex h-[27px] items-center rounded-xs border border-[#605e5c] bg-white pl-1.5">
        <SearchIcon />
        <input type="text" aria-label="Search fields" placeholder="Search" className="ml-1.5 w-full text-xs outline-none placeholder:text-[#605e5c]" />
      </label>
    </aside>
  )
}

function PageTabs() {
  const [active, setActive] = useState(1)
  return (
    <div className="flex h-9 shrink-0 border-b border-[#e1dfdd] bg-[#f3f2f1] text-[11px] text-[#252423]">
      <div className="flex w-10 items-center justify-around border-r border-[#a19f9d]">
        <svg width="5" height="8" viewBox="0 0 5 8" fill="#c8c6c4" aria-hidden="true"><path d="M5 0V8L0 4Z" /></svg>
        <svg width="5" height="8" viewBox="0 0 5 8" fill="#c8c6c4" aria-hidden="true"><path d="M0 0V8L5 4Z" /></svg>
      </div>
      {[1, 2, 3, 4].map((n) => (
        <button
          key={n}
          onClick={() => setActive(n)}
          className={`relative w-[76px] border-r border-[#c8c6c4] ${
            n === active ? 'bg-white shadow-[inset_0_-4px_0_#117865]' : ''
          }`}
        >
          Page {n}
          {n === active && <X className="absolute top-[6px] right-1 size-2" strokeWidth={4} />}
        </button>
      ))}
      <button aria-label="New page" className="my-0.5 flex w-10 items-center justify-center bg-[#117865]">
        <Icon size={11} className="stroke-white!"><path d="M5.500 0V11M0 5.500H11" strokeWidth="2.500" /></Icon>
      </button>
    </div>
  )
}

function StatusBar() {
  return (
    <footer className="flex h-[23px] shrink-0 items-center bg-[#f3f2f1] pr-[22px] pl-[5px] text-[#3b3a39]">
      <span className="text-xs">Page 1 of 4</span>
      <div className="ml-auto flex items-center text-xs text-[#605e5c]">
        <span className="font-bold">-</span>
        <input
          type="range"
          min="10"
          max="196"
          defaultValue="105"
          aria-label="Zoom"
          className="mx-1 h-3 w-[100px] appearance-none bg-[linear-gradient(#605e5c,#605e5c)] bg-[length:100%_1px] bg-center bg-no-repeat [&::-webkit-slider-thumb]:h-3 [&::-webkit-slider-thumb]:w-1 [&::-webkit-slider-thumb]:appearance-none [&::-webkit-slider-thumb]:bg-[#605e5c]"
        />
        <span className="ml-0.5 text-sm leading-4">+</span>
        <span className="mr-4 ml-3.5">103%</span>
        <button aria-label="Fit to page">
          <Icon size={16} className="stroke-[#605e5c]!">
            <path d="M0.500 2.500H15.500V13.500H0.500Z" />
            <path d="M3 7V5H5.500M10.500 5H13V7M13 9V11H10.500M5.500 11H3V9" />
          </Icon>
        </button>
      </div>
    </footer>
  )
}

const pinned = [
  ['Edge', <FaEdge className="size-6 text-[#1b8ee0]" />],
  ['File Explorer', (
    <Icon size={22} className="stroke-none!">
      <path d="M1 3H9L11 5H21V20H1Z" fill="#e8a33d" /><path d="M1 7H21V20H1Z" fill="#fcd462" />
      <path d="M4 20V13Q4 11 6 11H16Q18 11 18 13V20H14V16H8V20Z" fill="#4a9fe0" />
    </Icon>
  )],
  ['Microsoft Store', (
    <Icon size={24} className="stroke-none!">
      <path d="M7.500 6V2H16.500V6" stroke="#2f9be8" strokeWidth="2" />
      <path d="M1 5H23V21Q23 23 21 23H3Q1 23 1 21Z" fill="#f5f5f5" />
      <rect x="7" y="9" width="4.500" height="4.500" fill="#f25022" /><rect x="12.500" y="9" width="4.500" height="4.500" fill="#7fba00" />
      <rect x="7" y="14.500" width="4.500" height="4.500" fill="#00a4ef" /><rect x="12.500" y="14.500" width="4.500" height="4.500" fill="#ffb900" />
    </Icon>
  )],
  ['Netflix', <span className="flex size-6 items-center justify-center bg-black font-['Liberation_Sans',sans-serif] text-lg leading-none font-bold text-[#d81f26]">N</span>],
  ['Brave', (
    <Icon size={24} className="stroke-none!">
      <path d="M7 0H17L22 5L21 14Q19 20 12 24Q5 20 3 14L2 5Z" fill="#f4401f" />
      <path d="M7 4L12 5L17 4L20 8L17 12L18 15L12 20L6 15L7 12L4 8Z" fill="#fff" />
      <path d="M7 8L11 9L10 11ZM17 8L13 9L14 11ZM12 10L14 14L12 16L10 14Z" fill="#f4401f" />
    </Icon>
  ), true],
  ['Spotify', <FaSpotify className="size-6 text-[#1ed760]" />],
  ['WhatsApp', <span className="flex size-6 items-center justify-center rounded-full bg-[#25d366]"><FaWhatsapp className="size-6 text-white" /></span>],
  ['uTorrent', <span className="flex size-6 items-center justify-center rounded-full bg-[#77b255] text-xl leading-none font-bold text-white">µ</span>, true],
  ['VLC', (
    <Icon size={24} className="stroke-none!">
      <path d="M5 16H19L22 23H2Z" fill="#ee8a1d" /><path d="M10.500 1H13.500L18 18Q12 21 6 18Z" fill="#ee8a1d" />
      <path d="M9.500 5H14.500L15.500 9H8.500ZM7.500 13H16.500L17.300 16H6.700Z" fill="#eee" />
    </Icon>
  ), true],
  ['Excel', (
    <Icon size={24} className="stroke-none!">
      <rect x="6" y="1" width="18" height="22" rx="1" fill="#107c41" /><rect x="15" y="1" width="9" height="11" fill="#33c481" />
      <rect x="6" y="1" width="9" height="6" fill="#21a366" /><rect x="0" y="6" width="12" height="12" fill="#0d6b38" />
      <text x="6" y="16" fontSize="11" fontWeight="700" fill="#fff" textAnchor="middle">X</text>
    </Icon>
  ), true],
  ['Power BI', (
    <Icon size={24} className="stroke-none!">
      <rect x="14" y="0" width="7" height="24" rx="1" fill="#d98b14" /><rect x="9" y="6" width="8" height="18" rx="1" fill="#f2c230" />
      <rect x="3" y="12" width="9" height="12" rx="1" fill="#fbd96b" />
    </Icon>
  ), true, true],
]

function Taskbar() {
  return (
    <div className="flex h-[41px] shrink-0 items-stretch bg-[linear-gradient(90deg,#241f25,#35282a_15%,#2b2023_28%,#3a2a2b_36%,#2e2a30_45%,#2a2127_55%,#222636_68%,#242332_80%,#2b2330)] text-xs text-white">
      <button aria-label="Start" className="flex w-12 items-center justify-center">
        <Icon size={16} className="fill-white! stroke-none!">
          <path d="M0 2L7 1V7.500H0ZM8 1L16 0V7.500H8ZM0 8.500H7V15L0 14ZM8 8.500H16V16L8 15Z" />
        </Icon>
      </button>
      <button aria-label="Search Windows" className="flex w-12 items-center justify-center">
        <SearchIcon />
      </button>
      <button aria-label="Task view" className="mr-0.5 flex w-12 items-center justify-center">
        <Icon size={16} className="stroke-white!">
          <path d="M1.500 0V2.500H10.500V0M1.500 5.500H10.500V10.500H1.500ZM1.500 16V13.500H10.500V16M14.500 0V3M14.500 9V16" />
          <rect x="13" y="5" width="3" height="3" fill="#fff" stroke="none" />
        </Icon>
      </button>
      {pinned.map(([name, glyph, open, focused]) => (
        <button
          key={name}
          aria-label={name}
          className={`flex w-[49px] items-center justify-center ${focused ? 'bg-[#665d5b]' : ''}`}
        >
          <span className={`flex h-full items-center justify-center border-y-2 border-t-transparent ${focused ? 'w-full' : 'w-10'} ${open ? 'border-b-[#fbdb9f]' : 'border-b-transparent'}`}>
            {glyph}
          </span>
        </button>
      ))}

      <div className="ml-auto flex items-center">
        <button className="mr-2.5 flex items-center gap-2 text-[13px]">
          <Icon size={25} className="stroke-none!">
            <path d="M12 0L14 6L19 8L13 15L4 14L1 8L8 6Z" fill="#f2a93b" />
            <path d="M5 24Q0 23 1 18Q3 14 7 15Q9 8 15 10Q19 11 20 15Q25 17 24 21Q23 24 19 24Z" fill="#a9d6f5" />
            <circle cx="22" cy="3" r="3" fill="#e0322b" />
          </Icon>
          <span>17°C</span>
          <span dir="rtl" lang="ar" className="font-['DejaVu_Sans',sans-serif]">غائم غالبًا</span>
        </button>
        <button aria-label="Show hidden icons" className="flex w-8 justify-center"><ChevronUp className="size-5" strokeWidth={1.5} /></button>
        <button aria-label="Meet now" className="flex w-8 justify-center">
          <Icon size={18} className="stroke-white!">
            <path d="M4.500 5.500H11.500V12.500H4.500ZM11.500 8L14.500 6V12L11.500 10M4 3Q8 0 13 3M4 15Q8 18 13 15" strokeWidth="1.200" />
          </Icon>
        </button>
        <button aria-label="OneDrive" className="flex w-8 justify-center">
          <Icon size={18} className="stroke-none!">
            <path d="M3 12Q0 11 1 8Q3 5 5 6Q8 1 12 4Q15 5 14 12Z" fill="#c8c8c8" />
            <circle cx="13" cy="12" r="5" fill="#e0322b" /><path d="M11 10L15 14M15 10L11 14" stroke="#fff" strokeWidth="1.300" />
          </Icon>
        </button>
        <button aria-label="Battery" className="flex w-8 justify-center">
          <Icon size={18} className="stroke-white!">
            <path d="M7 5.500H16.500V12.500H5.500V10M16.500 7.500H17.500V10.500H16.500M1.500 5.500H5.500V8L3.500 9.500L1.500 8ZM2.500 3V5M4.500 3V5M3.500 10V14" />
          </Icon>
        </button>
        <button aria-label="Network" className="flex w-8 justify-center"><Wifi className="size-4 -rotate-45" strokeWidth={1.5} /></button>
        <button aria-label="Volume" className="flex w-8 justify-center"><Volume2 className="size-4.5" strokeWidth={1.3} /></button>
        <button aria-label="Windows Ink" className="flex w-10 justify-center">
          <Icon size={18} className="stroke-white!">
            <path d="M2 16L9 4Q11 1 12 3T8 12Q5 16 3 14Q2 10 6 10H14Q17 8 15 7Q12 8 11 12" strokeWidth="1.300" />
          </Icon>
        </button>
        <button className="w-9 text-center">ENG</button>
        <button className="w-[66px] text-center text-[11px] leading-[19px] whitespace-nowrap">
          6:58 PM
          <br />
          1/16/2023
        </button>
        <button aria-label="Notifications" className="flex w-[44px] justify-center">
          <Icon size={17} className="stroke-white!"><path d="M0.500 1.500H16.500V12.500H11L8.500 15.500L6 12.500H0.500Z" strokeWidth="1.200" /></Icon>
        </button>
        <div className="mr-1 ml-0.5 h-[41px] w-px bg-[#6b6669]" />
      </div>
    </div>
  )
}

function Watermark() {
  return (
    <div className="pointer-events-none absolute bottom-5 left-1/2 z-20 w-[232px] -translate-x-[116px] text-center font-bold whitespace-nowrap text-[#a0a0a0]/30">
      <div lang="ar" dir="rtl" className="font-['DejaVu_Sans',sans-serif] text-[66px] leading-[76px]">مستقل</div>
      <div className="font-['Liberation_Sans',sans-serif] text-[38px] leading-10 text-[#a0a0a0]/50">mostaql.com</div>
    </div>
  )
}

export default function App() {
  return (
    <div className="relative flex min-h-screen flex-col overflow-hidden bg-[#f3f2f1] font-['Open_Sans','Noto_Sans',sans-serif]">
      <TitleBar />
      <Ribbon />
      <div className="flex flex-1">
        <ViewRail />
        <div className="flex min-w-0 flex-1 flex-col">
          <div className="flex flex-1">
            <Canvas />
            <FiltersPane />
          </div>
          <PageTabs />
        </div>
        <VisualizationsPane />
        <FieldsPane />
      </div>
      <StatusBar />
      <Taskbar />
      <Watermark />
    </div>
  )
}
